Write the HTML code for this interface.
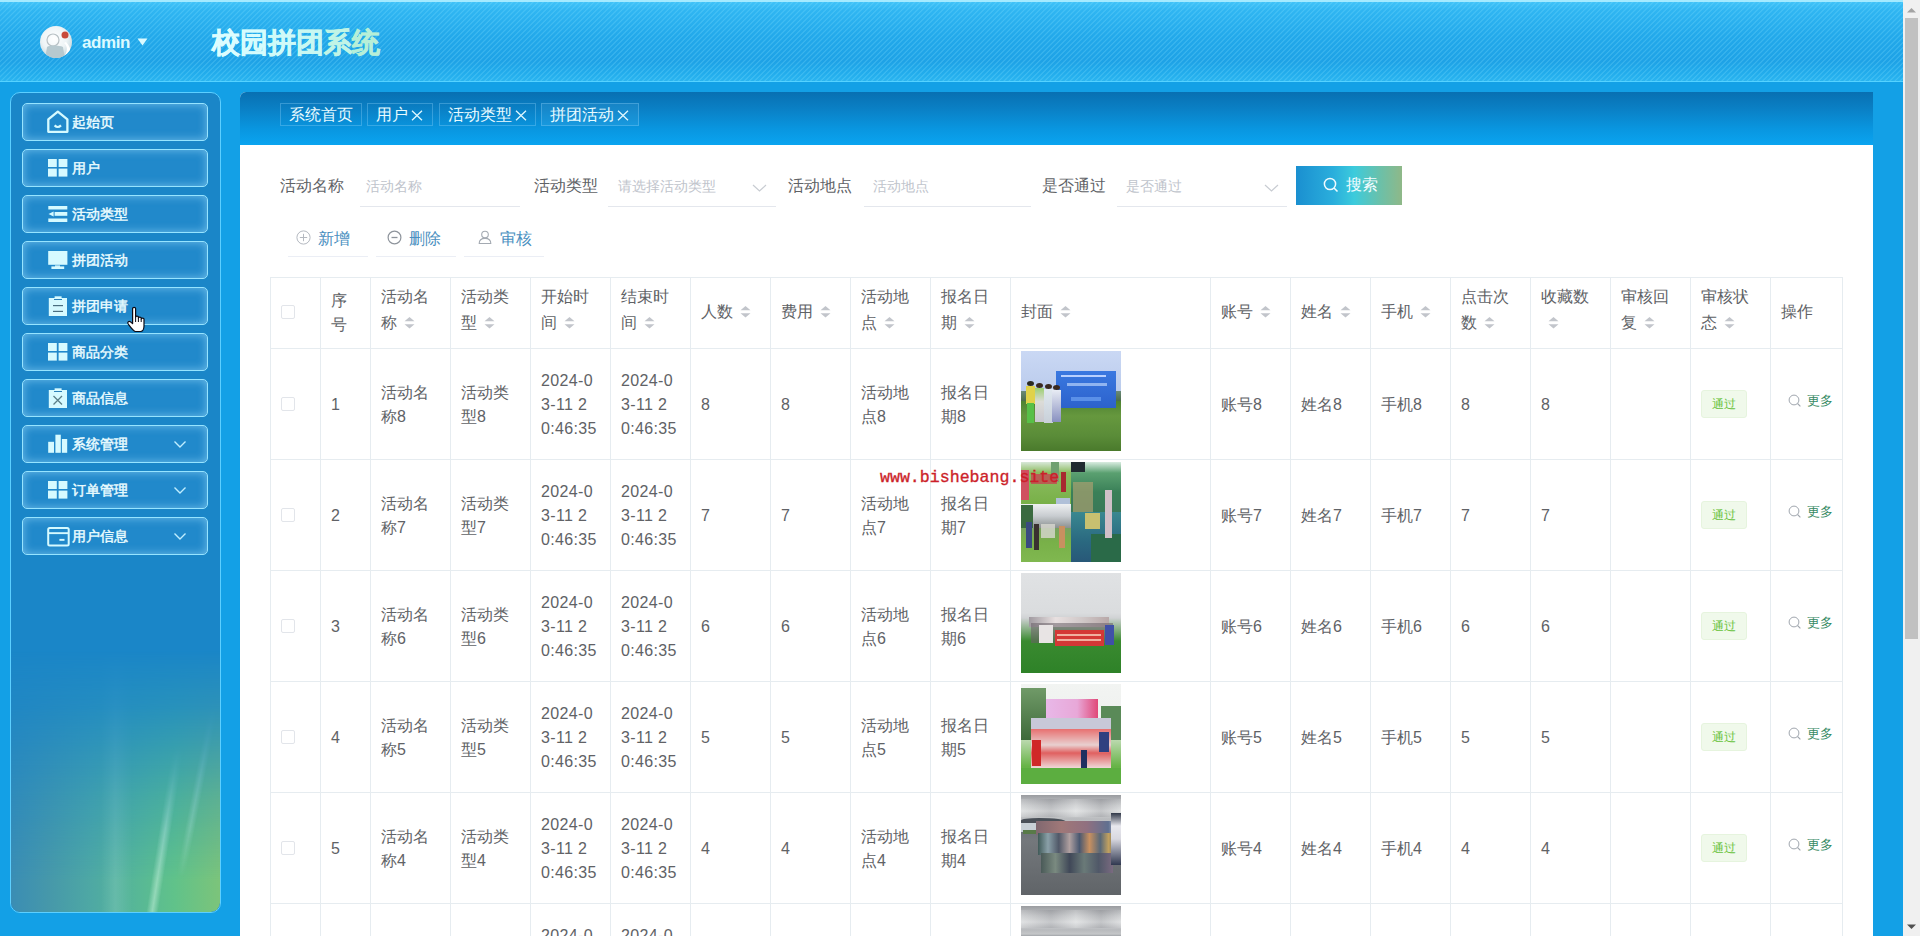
<!DOCTYPE html>
<html><head><meta charset="utf-8">
<style>
*{box-sizing:border-box;margin:0;padding:0}
html,body{width:1920px;height:936px;overflow:hidden}
body{position:relative;background:#13a0e6;font-family:"Liberation Sans",sans-serif;color:#606266}
#L{position:absolute;left:0;top:0;width:1920px;height:936px;overflow:hidden}
#L>div,#L>svg{position:absolute}
#hdr{left:0;top:0;width:1903px;height:82px;
 background:
  repeating-linear-gradient(135deg, rgba(255,255,255,0) 0px, rgba(255,255,255,0) 1.6px, rgba(130,225,255,0.26) 2.4px, rgba(130,225,255,0.26) 2.8px, rgba(255,255,255,0) 3.6px),
  linear-gradient(180deg,#40c2f8 0%,#30b6f2 10%,#22a8ea 45%,#1ea2e6 75%,#22acec 90%,#2ab4f0 100%);
 border-top:2px solid #a4eaff;border-bottom:1px solid #55d2ff}
#uname{left:82px;top:33px;font-size:17px;font-weight:bold;letter-spacing:-0.4px;color:#dcfaff;line-height:20px;white-space:nowrap}
#title{left:212px;top:25px;font-size:28px;font-weight:bold;line-height:36px;white-space:nowrap;-webkit-text-stroke:0.55px currentColor}
#side{left:10px;top:92px;width:211px;height:821px;border:1px solid #5ccfff;border-radius:10px;overflow:hidden;
 background:#1a86c8}
#aur{left:11px;top:650px;width:209px;height:262px;border-radius:0 0 9px 9px;overflow:hidden;
 background:
  linear-gradient(90deg, transparent 0 43%, rgba(230,255,255,.13) 50%, transparent 58%),
  linear-gradient(90deg,#3a8db4 0%,#4698aa 18%,#4ea8a4 38%,#56b698 58%,#60c28a 78%,#7cc47a 100%);
 -webkit-mask-image:linear-gradient(180deg,transparent 0%,rgba(0,0,0,.2) 22%,rgba(0,0,0,.7) 58%,#000 88%);
 mask-image:linear-gradient(180deg,transparent 0%,rgba(0,0,0,.2) 22%,rgba(0,0,0,.7) 58%,#000 88%)}
#aur div{position:absolute}
.mi{left:22px;width:186px;height:38px;border:1px solid #96e4ff;border-radius:5px;
 background:#2189cb;box-shadow:inset 0 0 10px rgba(165,225,255,0.6)}
.mt{left:72px;color:#eafcff;font-size:14px;font-weight:normal;-webkit-text-stroke:0.45px #eafcff;line-height:18px;white-space:nowrap}
#main{left:240px;top:92px;width:1633px;height:844px;background:#fff;border-top-left-radius:6px}
#tabbar{left:240px;top:92px;width:1633px;height:53px;border-top-left-radius:6px;background:linear-gradient(180deg,#0870b2 0%,#0a7fc4 30%,#0996e0 70%,#0aa4f0 100%)}
.tab{top:103px;height:23px;border:1px solid rgba(140,210,250,0.35)}
.tabt{top:104px;color:#e8fbff;font-size:16px;line-height:21px;white-space:nowrap}
#scroll{left:1903px;top:0;width:17px;height:936px;background:#f0f0f0}
#thumb{left:1905px;top:18px;width:13px;height:621px;background:#c1c1c1}
.lbl{font-size:16px;line-height:22px;color:#606266;white-space:nowrap}
.ph{font-size:14px;line-height:18px;color:#c0c4cc;white-space:nowrap}
.ul{top:206px;height:1px;background:#e4e7ed}
#sbtn{left:1296px;top:166px;width:106px;height:39px;background:linear-gradient(90deg,#1a8fd0 0%,#2aaedc 35%,#3ccbdc 55%,#6cc0a8 80%,#8fb888 100%)}
.sbt{left:1346px;top:175px;font-size:16px;line-height:20px;color:#f2fcff;white-space:nowrap}
.ab{top:256px;width:80px;height:1px;background:#ebeef5}
.abt{top:229px;font-size:16px;line-height:20px;color:#4a8fc0;white-space:nowrap}
.hl{height:1px;background:#e6ecf0}
.vl{width:1px;height:700px;background:#e6ecf0}
.ct{font-size:16px;line-height:24px;color:#606266;white-space:nowrap}
.num{letter-spacing:0.35px}
.cb{width:14px;height:14px;border:1px solid #e2e5ea;border-radius:2px}
.img{left:1021px;width:100px;height:100px;background:#6a9a40;overflow:hidden}
.img div{position:absolute}
.tag{width:46px;height:28px;border:1px solid #e6f4de;background:#f0f9eb;color:#67c23a;font-size:12px;line-height:26px;text-align:center;border-radius:3px}
.more{font-size:13px;line-height:16px;color:#368a64;white-space:nowrap}
#wm{left:880px;top:468px;font-family:"Liberation Mono",monospace;font-size:16.6px;line-height:20px;color:#cc1f2a;white-space:nowrap;-webkit-text-stroke:0.35px #cc1f2a}

</style></head>
<body>
<div id="L">
<div id="hdr"></div>
<svg style="left:39px;top:25px" width="34" height="34" viewBox="0 0 34 34"><defs><clipPath id="avc"><circle cx="17" cy="17" r="16"/></clipPath>
<radialGradient id="avg" cx="45%" cy="40%" r="60%"><stop offset="0" stop-color="#ffffff"/><stop offset="0.6" stop-color="#eef4f6"/><stop offset="1" stop-color="#c4d6dc"/></radialGradient></defs>
<g clip-path="url(#avc)"><rect width="34" height="34" fill="url(#avg)"/>
<circle cx="14" cy="15" r="6" fill="none" stroke="#b8c0c4" stroke-width="1.2"/>
<path d="M6 34 L8 22 C10 20 20 20 24 22 L26 34 Z" fill="#b7c9cf"/>
<circle cx="26" cy="10" r="3.5" fill="#c84a3a"/>
<path d="M25 18 C30 22 28 30 22 34 L30 34 C33 28 32 22 27 17 Z" fill="#ffffff"/></g></svg>
<div id="uname">admin</div>
<svg style="left:137px;top:38px" width="11" height="8" viewBox="0 0 11 8"><path d="M0.5 0.5 L10.5 0.5 L5.5 7.5 Z" fill="#dcfaff"/></svg>
<div id="title"><span style="color:#dcfdff">校</span><span style="color:#d6fcfd">园</span><span style="color:#cffaf8">拼</span><span style="color:#c8f8f2">团</span><span style="color:#c0f4e6">系</span><span style="color:#b6efd8">统</span></div>
<div id="side"></div><div id="aur"><div style="left:147px;top:95px;width:12px;height:185px;transform:rotate(9deg);background:linear-gradient(90deg,transparent,rgba(225,255,240,.42) 50%,transparent);-webkit-mask-image:linear-gradient(180deg,transparent,#000 45%,#000)"></div><div style="left:181px;top:55px;width:10px;height:175px;transform:rotate(11deg);background:linear-gradient(90deg,transparent,rgba(225,255,240,.28) 50%,transparent);-webkit-mask-image:linear-gradient(180deg,transparent,#000 40%,#000 70%,transparent)"></div></div>
<div class="mi" style="top:103px"></div>
<div class="mt" style="top:113px">起始页</div>
<div class="mi" style="top:149px"></div>
<div class="mt" style="top:159px">用户</div>
<div class="mi" style="top:195px"></div>
<div class="mt" style="top:205px">活动类型</div>
<div class="mi" style="top:241px"></div>
<div class="mt" style="top:251px">拼团活动</div>
<div class="mi" style="top:287px"></div>
<div class="mt" style="top:297px">拼团申请</div>
<div class="mi" style="top:333px"></div>
<div class="mt" style="top:343px">商品分类</div>
<div class="mi" style="top:379px"></div>
<div class="mt" style="top:389px">商品信息</div>
<div class="mi" style="top:425px"></div>
<div class="mt" style="top:435px">系统管理</div>
<svg style="left:173px;top:440px" width="14" height="9" viewBox="0 0 14 9"><path d="M1.5 1.5 L7 7 L12.5 1.5" fill="none" stroke="#bfeeff" stroke-width="1.4"/></svg>
<div class="mi" style="top:471px"></div>
<div class="mt" style="top:481px">订单管理</div>
<svg style="left:173px;top:486px" width="14" height="9" viewBox="0 0 14 9"><path d="M1.5 1.5 L7 7 L12.5 1.5" fill="none" stroke="#bfeeff" stroke-width="1.4"/></svg>
<div class="mi" style="top:517px"></div>
<div class="mt" style="top:527px">用户信息</div>
<svg style="left:173px;top:532px" width="14" height="9" viewBox="0 0 14 9"><path d="M1.5 1.5 L7 7 L12.5 1.5" fill="none" stroke="#bfeeff" stroke-width="1.4"/></svg>
<svg style="left:46px;top:110px" width="24" height="24" viewBox="0 0 24 24"><path d="M2.3 9.4 L11.8 1.6 L21.4 9.4 L21.4 21.8 L2.3 21.8 Z" fill="none" stroke="#d6faff" stroke-width="2.3" stroke-linejoin="round"/><path d="M8.6 15.4 Q11.8 18.6 15 15.4" fill="none" stroke="#d6faff" stroke-width="2.2"/></svg>
<svg style="left:48px;top:159px" width="20" height="18" viewBox="0 0 20 18"><rect x="0" y="0" width="8.8" height="8" fill="#d6faff"/><rect x="0" y="9.6" width="8.8" height="8" fill="#d6faff"/><rect x="10.6" y="0" width="8.8" height="8" fill="#d6faff"/><rect x="10.6" y="9.6" width="8.8" height="8" fill="#d6faff"/></svg>
<svg style="left:48px;top:205px" width="20" height="18" viewBox="0 0 20 18"><rect x="0.3" y="1" width="19" height="3.5" fill="#d6faff"/><rect x="6.6" y="7" width="12.7" height="3.8" fill="#d6faff"/><path d="M0.5 9 L5.6 6.4 L5.6 11.6 Z" fill="#d6faff"/><rect x="0.3" y="13.5" width="19" height="3.5" fill="#d6faff"/></svg>
<svg style="left:48px;top:250px" width="20" height="20" viewBox="0 0 20 20"><rect x="0.2" y="1" width="19.2" height="13.8" fill="#d6faff"/><rect x="3.4" y="16.4" width="12.8" height="2.6" fill="#d6faff"/><rect x="7" y="15.4" width="5" height="1.5" fill="#d6faff"/></svg>
<svg style="left:48px;top:295px" width="20" height="22" viewBox="0 0 20 22"><rect x="0.8" y="3" width="18.2" height="18" fill="#d6faff"/><rect x="6.6" y="1.3" width="7" height="2.7" fill="#d6faff"/><rect x="6" y="4" width="8" height="1" fill="#2a7fb8"/><rect x="5" y="10" width="10" height="1.2" fill="#4a6f80"/><rect x="5" y="15.8" width="10" height="1.2" fill="#4a6f80"/></svg>
<svg style="left:48px;top:343px" width="20" height="18" viewBox="0 0 20 18"><rect x="0" y="0" width="8.8" height="8" fill="#d6faff"/><rect x="0" y="9.6" width="8.8" height="8" fill="#d6faff"/><rect x="10.6" y="0" width="8.8" height="8" fill="#d6faff"/><rect x="10.6" y="9.6" width="8.8" height="8" fill="#d6faff"/></svg>
<svg style="left:48px;top:387px" width="20" height="22" viewBox="0 0 20 22"><rect x="0.8" y="3" width="18.2" height="18" fill="#d6faff"/><rect x="6.6" y="1.3" width="7" height="2.7" fill="#d6faff"/><rect x="6" y="4" width="8" height="1" fill="#2a7fb8"/><path d="M5.5 9 L14 17.5 M14 9 L5.5 17.5" stroke="#5a7f88" stroke-width="1.3"/></svg>
<svg style="left:48px;top:434px" width="20" height="20" viewBox="0 0 20 20"><rect x="0.2" y="7.8" width="5.8" height="11" fill="#d6faff"/><rect x="7.4" y="0.7" width="5.4" height="18.1" fill="#d6faff"/><rect x="13.9" y="5" width="5.3" height="13.8" fill="#d6faff"/></svg>
<svg style="left:48px;top:481px" width="20" height="18" viewBox="0 0 20 18"><rect x="0" y="0" width="8.8" height="8" fill="#d6faff"/><rect x="0" y="9.6" width="8.8" height="8" fill="#d6faff"/><rect x="10.6" y="0" width="8.8" height="8" fill="#d6faff"/><rect x="10.6" y="9.6" width="8.8" height="8" fill="#d6faff"/></svg>
<svg style="left:46px;top:526px" width="24" height="21" viewBox="0 0 24 21"><rect x="2.2" y="1.9" width="20.5" height="17.7" rx="1.5" fill="none" stroke="#d6faff" stroke-width="2"/><rect x="2.5" y="6.2" width="20" height="1.9" fill="#d6faff"/><rect x="13.4" y="12.9" width="5.1" height="1.9" fill="#d6faff"/></svg>
<svg style="left:126px;top:306px" width="22" height="27" viewBox="0 0 22 27"><path d="M6.6 2.6 C6.6 1 9.6 1 9.6 2.6 L9.6 11 C9.6 9.7 12.4 9.7 12.4 11 L12.4 12 C12.4 10.8 15.2 10.8 15.2 12 L15.2 13 C15.2 11.8 18 11.8 18 13 L18 20 C18 23 16.5 25.5 14.5 25.5 L9.5 25.5 C7.5 25.5 5.5 22.5 2.2 18 C1 16.3 2.6 14.6 4.4 15.8 L6.6 17.6 Z" fill="#ffffff" stroke="#0a0a14" stroke-width="1.2" stroke-linejoin="round"/><path d="M9.6 11 L9.6 16 M12.4 12 L12.4 16 M15.2 13 L15.2 16" stroke="#0a0a14" stroke-width="1"/></svg>
<div id="main"></div><div id="tabbar"></div>
<div class="tab" style="left:280px;width:82px"></div>
<div class="tabt" style="left:289px">系统首页</div>
<div class="tab" style="left:367px;width:66px"></div>
<div class="tabt" style="left:376px">用户</div>
<svg style="left:411px;top:110px" width="12" height="11" viewBox="0 0 12 11"><path d="M1 0.8 L11 10.2 M11 0.8 L1 10.2" stroke="#dff8ff" stroke-width="1.3"/></svg>
<div class="tab" style="left:439px;width:97px"></div>
<div class="tabt" style="left:448px">活动类型</div>
<svg style="left:515px;top:110px" width="12" height="11" viewBox="0 0 12 11"><path d="M1 0.8 L11 10.2 M11 0.8 L1 10.2" stroke="#dff8ff" stroke-width="1.3"/></svg>
<div class="tab" style="left:541px;width:98px;background:rgba(150,220,255,0.10)"></div>
<div class="tabt" style="left:550px">拼团活动</div>
<svg style="left:617px;top:110px" width="12" height="11" viewBox="0 0 12 11"><path d="M1 0.8 L11 10.2 M11 0.8 L1 10.2" stroke="#dff8ff" stroke-width="1.3"/></svg>
<div class="lbl" style="left:280px;top:175px">活动名称</div>
<div class="ph" style="left:366px;top:177px">活动名称</div>
<div class="ul" style="left:360px;width:160px"></div>
<div class="lbl" style="left:534px;top:175px">活动类型</div>
<div class="ph" style="left:618px;top:177px">请选择活动类型</div>
<div class="ul" style="left:608px;width:168px"></div>
<svg style="left:752px;top:184px" width="15" height="8" viewBox="0 0 15 8"><path d="M1 1 L7.5 7 L14 1" fill="none" stroke="#c8ccd2" stroke-width="1.2"/></svg>
<div class="lbl" style="left:788px;top:175px">活动地点</div>
<div class="ph" style="left:873px;top:177px">活动地点</div>
<div class="ul" style="left:864px;width:167px"></div>
<div class="lbl" style="left:1042px;top:175px">是否通过</div>
<div class="ph" style="left:1126px;top:177px">是否通过</div>
<div class="ul" style="left:1117px;width:170px"></div>
<svg style="left:1264px;top:184px" width="15" height="8" viewBox="0 0 15 8"><path d="M1 1 L7.5 7 L14 1" fill="none" stroke="#c8ccd2" stroke-width="1.2"/></svg>
<div id="sbtn"></div>
<svg style="left:1323px;top:177px" width="16" height="16" viewBox="0 0 16 16"><circle cx="7" cy="7" r="5.6" fill="none" stroke="#f0fbff" stroke-width="1.5"/><path d="M11 11 L14.5 14.5" stroke="#f0fbff" stroke-width="1.6"/></svg>
<div class="sbt">搜索</div>
<div class="ab" style="left:288px"></div>
<svg style="left:296px;top:230px" width="15" height="15" viewBox="0 0 15 15"><circle cx="7.5" cy="7.5" r="6.6" fill="none" stroke="#b4b9c0" stroke-width="1"/><path d="M7.5 3.8V11.2M3.8 7.5H11.2" stroke="#b4b9c0" stroke-width="1"/></svg>
<div class="abt" style="left:318px">新增</div>
<div class="ab" style="left:376px"></div>
<svg style="left:387px;top:230px" width="15" height="15" viewBox="0 0 15 15"><circle cx="7.5" cy="7.5" r="6.4" fill="none" stroke="#8e949c" stroke-width="1.2"/><path d="M4.5 7.5H10.5" stroke="#8e949c" stroke-width="1.3"/></svg>
<div class="abt" style="left:409px">删除</div>
<div class="ab" style="left:464px"></div>
<svg style="left:478px;top:230px" width="15" height="15" viewBox="0 0 15 15"><circle cx="7" cy="4.6" r="3.3" fill="none" stroke="#a4aab2" stroke-width="1.1"/><path d="M1.2 13.5 C1.2 9.8 3.6 8.4 7 8.4 C10.4 8.4 12.8 9.8 12.8 13.5 Z" fill="none" stroke="#a4aab2" stroke-width="1.1"/></svg>
<div class="abt" style="left:500px">审核</div>
<div class="hl" style="left:270px;top:277px;width:1573px"></div>
<div class="hl" style="left:270px;top:348px;width:1573px"></div>
<div class="hl" style="left:270px;top:459px;width:1573px"></div>
<div class="hl" style="left:270px;top:570px;width:1573px"></div>
<div class="hl" style="left:270px;top:681px;width:1573px"></div>
<div class="hl" style="left:270px;top:792px;width:1573px"></div>
<div class="hl" style="left:270px;top:903px;width:1573px"></div>
<div class="vl" style="left:270px;top:277px"></div>
<div class="vl" style="left:320px;top:277px"></div>
<div class="vl" style="left:370px;top:277px"></div>
<div class="vl" style="left:450px;top:277px"></div>
<div class="vl" style="left:530px;top:277px"></div>
<div class="vl" style="left:610px;top:277px"></div>
<div class="vl" style="left:690px;top:277px"></div>
<div class="vl" style="left:770px;top:277px"></div>
<div class="vl" style="left:850px;top:277px"></div>
<div class="vl" style="left:930px;top:277px"></div>
<div class="vl" style="left:1010px;top:277px"></div>
<div class="vl" style="left:1210px;top:277px"></div>
<div class="vl" style="left:1290px;top:277px"></div>
<div class="vl" style="left:1370px;top:277px"></div>
<div class="vl" style="left:1450px;top:277px"></div>
<div class="vl" style="left:1530px;top:277px"></div>
<div class="vl" style="left:1610px;top:277px"></div>
<div class="vl" style="left:1690px;top:277px"></div>
<div class="vl" style="left:1770px;top:277px"></div>
<div class="vl" style="left:1842px;top:277px"></div>
<div class="cb" style="left:281px;top:305px"></div>
<div class="ct" style="left:331px;top:289.3px">序</div>
<div class="ct" style="left:331px;top:313.3px">号</div>
<div class="ct" style="left:381px;top:284.5px">活动名</div>
<div class="ct" style="left:381px;top:311px">称</div>
<svg style="left:404px;top:317.3px" width="11" height="12" viewBox="0 0 11 12"><path d="M0.5 4.3 L5.5 0 L10.5 4.3 Z M0.5 7.2 L10.5 7.2 L5.5 11.5 Z" fill="#c2c5cb"/></svg>
<div class="ct" style="left:461px;top:284.5px">活动类</div>
<div class="ct" style="left:461px;top:311px">型</div>
<svg style="left:484px;top:317.3px" width="11" height="12" viewBox="0 0 11 12"><path d="M0.5 4.3 L5.5 0 L10.5 4.3 Z M0.5 7.2 L10.5 7.2 L5.5 11.5 Z" fill="#c2c5cb"/></svg>
<div class="ct" style="left:541px;top:284.5px">开始时</div>
<div class="ct" style="left:541px;top:311px">间</div>
<svg style="left:564px;top:317.3px" width="11" height="12" viewBox="0 0 11 12"><path d="M0.5 4.3 L5.5 0 L10.5 4.3 Z M0.5 7.2 L10.5 7.2 L5.5 11.5 Z" fill="#c2c5cb"/></svg>
<div class="ct" style="left:621px;top:284.5px">结束时</div>
<div class="ct" style="left:621px;top:311px">间</div>
<svg style="left:644px;top:317.3px" width="11" height="12" viewBox="0 0 11 12"><path d="M0.5 4.3 L5.5 0 L10.5 4.3 Z M0.5 7.2 L10.5 7.2 L5.5 11.5 Z" fill="#c2c5cb"/></svg>
<div class="ct" style="left:701px;top:299.5px">人数</div>
<svg style="left:740px;top:305.8px" width="11" height="12" viewBox="0 0 11 12"><path d="M0.5 4.3 L5.5 0 L10.5 4.3 Z M0.5 7.2 L10.5 7.2 L5.5 11.5 Z" fill="#c2c5cb"/></svg>
<div class="ct" style="left:781px;top:299.5px">费用</div>
<svg style="left:820px;top:305.8px" width="11" height="12" viewBox="0 0 11 12"><path d="M0.5 4.3 L5.5 0 L10.5 4.3 Z M0.5 7.2 L10.5 7.2 L5.5 11.5 Z" fill="#c2c5cb"/></svg>
<div class="ct" style="left:861px;top:284.5px">活动地</div>
<div class="ct" style="left:861px;top:311px">点</div>
<svg style="left:884px;top:317.3px" width="11" height="12" viewBox="0 0 11 12"><path d="M0.5 4.3 L5.5 0 L10.5 4.3 Z M0.5 7.2 L10.5 7.2 L5.5 11.5 Z" fill="#c2c5cb"/></svg>
<div class="ct" style="left:941px;top:284.5px">报名日</div>
<div class="ct" style="left:941px;top:311px">期</div>
<svg style="left:964px;top:317.3px" width="11" height="12" viewBox="0 0 11 12"><path d="M0.5 4.3 L5.5 0 L10.5 4.3 Z M0.5 7.2 L10.5 7.2 L5.5 11.5 Z" fill="#c2c5cb"/></svg>
<div class="ct" style="left:1021px;top:299.5px">封面</div>
<svg style="left:1060px;top:305.8px" width="11" height="12" viewBox="0 0 11 12"><path d="M0.5 4.3 L5.5 0 L10.5 4.3 Z M0.5 7.2 L10.5 7.2 L5.5 11.5 Z" fill="#c2c5cb"/></svg>
<div class="ct" style="left:1221px;top:299.5px">账号</div>
<svg style="left:1260px;top:305.8px" width="11" height="12" viewBox="0 0 11 12"><path d="M0.5 4.3 L5.5 0 L10.5 4.3 Z M0.5 7.2 L10.5 7.2 L5.5 11.5 Z" fill="#c2c5cb"/></svg>
<div class="ct" style="left:1301px;top:299.5px">姓名</div>
<svg style="left:1340px;top:305.8px" width="11" height="12" viewBox="0 0 11 12"><path d="M0.5 4.3 L5.5 0 L10.5 4.3 Z M0.5 7.2 L10.5 7.2 L5.5 11.5 Z" fill="#c2c5cb"/></svg>
<div class="ct" style="left:1381px;top:299.5px">手机</div>
<svg style="left:1420px;top:305.8px" width="11" height="12" viewBox="0 0 11 12"><path d="M0.5 4.3 L5.5 0 L10.5 4.3 Z M0.5 7.2 L10.5 7.2 L5.5 11.5 Z" fill="#c2c5cb"/></svg>
<div class="ct" style="left:1461px;top:284.5px">点击次</div>
<div class="ct" style="left:1461px;top:311px">数</div>
<svg style="left:1484px;top:317.3px" width="11" height="12" viewBox="0 0 11 12"><path d="M0.5 4.3 L5.5 0 L10.5 4.3 Z M0.5 7.2 L10.5 7.2 L5.5 11.5 Z" fill="#c2c5cb"/></svg>
<div class="ct" style="left:1541px;top:284.5px">收藏数</div>
<svg style="left:1548px;top:317.3px" width="11" height="12" viewBox="0 0 11 12"><path d="M0.5 4.3 L5.5 0 L10.5 4.3 Z M0.5 7.2 L10.5 7.2 L5.5 11.5 Z" fill="#c2c5cb"/></svg>
<div class="ct" style="left:1621px;top:284.5px">审核回</div>
<div class="ct" style="left:1621px;top:311px">复</div>
<svg style="left:1644px;top:317.3px" width="11" height="12" viewBox="0 0 11 12"><path d="M0.5 4.3 L5.5 0 L10.5 4.3 Z M0.5 7.2 L10.5 7.2 L5.5 11.5 Z" fill="#c2c5cb"/></svg>
<div class="ct" style="left:1701px;top:284.5px">审核状</div>
<div class="ct" style="left:1701px;top:311px">态</div>
<svg style="left:1724px;top:317.3px" width="11" height="12" viewBox="0 0 11 12"><path d="M0.5 4.3 L5.5 0 L10.5 4.3 Z M0.5 7.2 L10.5 7.2 L5.5 11.5 Z" fill="#c2c5cb"/></svg>
<div class="ct" style="left:1781px;top:299.5px">操作</div>
<div class="cb" style="left:281px;top:397px"></div>
<div class="ct" style="left:331px;top:392.5px">1</div>
<div class="ct" style="left:381px;top:380.5px">活动名<br>称8</div>
<div class="ct" style="left:461px;top:380.5px">活动类<br>型8</div>
<div class="ct num" style="left:541px;top:368.5px">2024-0<br>3-11 2<br>0:46:35</div>
<div class="ct num" style="left:621px;top:368.5px">2024-0<br>3-11 2<br>0:46:35</div>
<div class="ct" style="left:701px;top:392.5px">8</div>
<div class="ct" style="left:781px;top:392.5px">8</div>
<div class="ct" style="left:861px;top:380.5px">活动地<br>点8</div>
<div class="ct" style="left:941px;top:380.5px">报名日<br>期8</div>
<div class="img im1" style="top:351px"><div style="left:0;top:0;width:100px;height:52px;background:linear-gradient(180deg,#cad8f4,#b6c8ea)"></div>
<div style="left:0;top:40px;width:100px;height:14px;background:linear-gradient(180deg,#6a8a78,#40603a)"></div>
<div style="left:0;top:50px;width:100px;height:50px;background:linear-gradient(180deg,#4e8232 0,#66983e 30%,#5a8c38 70%,#4a7a2c 100%)"></div>
<div style="left:35px;top:20px;width:60px;height:37px;background:linear-gradient(180deg,#3a78e0,#2c62cc)"></div>
<div style="left:40px;top:24px;width:45px;height:2px;background:#b8d0ff"></div>
<div style="left:46px;top:32px;width:40px;height:3px;background:#90b4f0"></div>
<div style="left:50px;top:46px;width:30px;height:4px;background:#5a90e8"></div>
<div style="left:6px;top:30px;width:7px;height:5px;border-radius:50%;background:#2a2a20"></div>
<div style="left:5px;top:35px;width:9px;height:18px;background:#e0d24a"></div>
<div style="left:6px;top:52px;width:7px;height:20px;background:#58c048"></div>
<div style="left:15px;top:32px;width:7px;height:5px;border-radius:50%;background:#3a2a20"></div>
<div style="left:14px;top:37px;width:9px;height:34px;background:linear-gradient(180deg,#9ccf70,#dcdcd8 40%,#c8c8d0)"></div>
<div style="left:24px;top:33px;width:7px;height:5px;border-radius:50%;background:#3a2a20"></div>
<div style="left:23px;top:38px;width:9px;height:34px;background:linear-gradient(180deg,#e0e8f0,#c8d0d8)"></div>
<div style="left:32px;top:34px;width:7px;height:5px;border-radius:50%;background:#3a2a20"></div>
<div style="left:31px;top:39px;width:9px;height:32px;background:linear-gradient(180deg,#e8ecf4,#8890c0)"></div></div>
<div class="ct" style="left:1221px;top:392.5px">账号8</div>
<div class="ct" style="left:1301px;top:392.5px">姓名8</div>
<div class="ct" style="left:1381px;top:392.5px">手机8</div>
<div class="ct" style="left:1461px;top:392.5px">8</div>
<div class="ct" style="left:1541px;top:392.5px">8</div>
<div class="tag" style="left:1701px;top:390px">通过</div>
<svg style="left:1788px;top:394px" width="14" height="14" viewBox="0 0 14 14"><circle cx="6" cy="6" r="4.9" fill="none" stroke="#a0a6ae" stroke-width="1"/><path d="M9.5 9.5 L12.4 12.4" stroke="#a0a6ae" stroke-width="1.1"/></svg>
<div class="more" style="left:1807px;top:393px">更多</div>
<div class="cb" style="left:281px;top:508px"></div>
<div class="ct" style="left:331px;top:503.5px">2</div>
<div class="ct" style="left:381px;top:491.5px">活动名<br>称7</div>
<div class="ct" style="left:461px;top:491.5px">活动类<br>型7</div>
<div class="ct num" style="left:541px;top:479.5px">2024-0<br>3-11 2<br>0:46:35</div>
<div class="ct num" style="left:621px;top:479.5px">2024-0<br>3-11 2<br>0:46:35</div>
<div class="ct" style="left:701px;top:503.5px">7</div>
<div class="ct" style="left:781px;top:503.5px">7</div>
<div class="ct" style="left:861px;top:491.5px">活动地<br>点7</div>
<div class="ct" style="left:941px;top:491.5px">报名日<br>期7</div>
<div class="img im2" style="top:462px"><div style="left:0;top:0;width:50px;height:42px;background:linear-gradient(180deg,#d8e8d8 0,#8cbc60 25%,#78b048 100%)"></div>
<div style="left:30px;top:0;width:8px;height:20px;background:#70a070"></div>
<div style="left:0;top:8px;width:8px;height:30px;background:#d05060"></div>
<div style="left:10px;top:12px;width:26px;height:10px;background:#c84050;opacity:.75"></div>
<div style="left:40px;top:10px;width:5px;height:20px;background:#a82830"></div>
<div style="left:35px;top:36px;width:14px;height:6px;background:#b0c0d8"></div>
<div style="left:0;top:42px;width:50px;height:24px;background:linear-gradient(180deg,#eef0f2,#c8ccd0 50%,#8a9090)"></div>
<div style="left:0;top:43px;width:12px;height:24px;background:#3a6a40"></div>
<div style="left:0;top:66px;width:50px;height:34px;background:linear-gradient(180deg,#78a060,#78b048 40%,#80b850)"></div>
<div style="left:5px;top:60px;width:6px;height:26px;background:#3a4a80"></div>
<div style="left:13px;top:62px;width:5px;height:26px;background:#3a3030"></div>
<div style="left:20px;top:62px;width:14px;height:14px;background:#d8d8d0;opacity:.8"></div>
<div style="left:38px;top:64px;width:6px;height:22px;background:#c89060"></div>
<div style="left:50px;top:0;width:50px;height:50px;background:linear-gradient(180deg,#d8ece0 0,#5aa070 22%,#3a8058 60%,#3a7858 100%)"></div>
<div style="left:50px;top:0;width:14px;height:10px;background:#202a30"></div>
<div style="left:52px;top:20px;width:20px;height:30px;background:#a8a070;opacity:.7"></div>
<div style="left:50px;top:50px;width:50px;height:50px;background:linear-gradient(180deg,#3a8890,#2a6880 60%,#285878)"></div>
<div style="left:64px;top:51px;width:15px;height:16px;background:#c8c070"></div>
<div style="left:70px;top:72px;width:30px;height:28px;background:#2a6a48"></div>
<div style="left:84px;top:28px;width:7px;height:48px;background:#d0c0c8"></div></div>
<div class="ct" style="left:1221px;top:503.5px">账号7</div>
<div class="ct" style="left:1301px;top:503.5px">姓名7</div>
<div class="ct" style="left:1381px;top:503.5px">手机7</div>
<div class="ct" style="left:1461px;top:503.5px">7</div>
<div class="ct" style="left:1541px;top:503.5px">7</div>
<div class="tag" style="left:1701px;top:501px">通过</div>
<svg style="left:1788px;top:505px" width="14" height="14" viewBox="0 0 14 14"><circle cx="6" cy="6" r="4.9" fill="none" stroke="#a0a6ae" stroke-width="1"/><path d="M9.5 9.5 L12.4 12.4" stroke="#a0a6ae" stroke-width="1.1"/></svg>
<div class="more" style="left:1807px;top:504px">更多</div>
<div class="cb" style="left:281px;top:619px"></div>
<div class="ct" style="left:331px;top:614.5px">3</div>
<div class="ct" style="left:381px;top:602.5px">活动名<br>称6</div>
<div class="ct" style="left:461px;top:602.5px">活动类<br>型6</div>
<div class="ct num" style="left:541px;top:590.5px">2024-0<br>3-11 2<br>0:46:35</div>
<div class="ct num" style="left:621px;top:590.5px">2024-0<br>3-11 2<br>0:46:35</div>
<div class="ct" style="left:701px;top:614.5px">6</div>
<div class="ct" style="left:781px;top:614.5px">6</div>
<div class="ct" style="left:861px;top:602.5px">活动地<br>点6</div>
<div class="ct" style="left:941px;top:602.5px">报名日<br>期6</div>
<div class="img im3" style="top:573px"><div style="left:0;top:0;width:100px;height:100px;background:linear-gradient(180deg,#e0e2e4 0,#dadcde 40%,#d0d2d4 45%,#3a8a30 68%,#2e8228 100%)"></div>
<div style="left:8px;top:44px;width:80px;height:10px;background:linear-gradient(90deg,#a09aa0,#e8e0e0,#d0c8c8,#b8a8a8)"></div>
<div style="left:10px;top:50px;width:82px;height:20px;background:#6a6068;opacity:.55"></div>
<div style="left:34px;top:57px;width:49px;height:16px;background:#d43836"></div>
<div style="left:36px;top:61px;width:44px;height:2px;background:#f0b0a0"></div>
<div style="left:36px;top:66px;width:44px;height:2px;background:#f0b0a0"></div>
<div style="left:18px;top:52px;width:14px;height:18px;background:#e8e4e4"></div>
<div style="left:84px;top:52px;width:9px;height:20px;background:#4050a8"></div></div>
<div class="ct" style="left:1221px;top:614.5px">账号6</div>
<div class="ct" style="left:1301px;top:614.5px">姓名6</div>
<div class="ct" style="left:1381px;top:614.5px">手机6</div>
<div class="ct" style="left:1461px;top:614.5px">6</div>
<div class="ct" style="left:1541px;top:614.5px">6</div>
<div class="tag" style="left:1701px;top:612px">通过</div>
<svg style="left:1788px;top:616px" width="14" height="14" viewBox="0 0 14 14"><circle cx="6" cy="6" r="4.9" fill="none" stroke="#a0a6ae" stroke-width="1"/><path d="M9.5 9.5 L12.4 12.4" stroke="#a0a6ae" stroke-width="1.1"/></svg>
<div class="more" style="left:1807px;top:615px">更多</div>
<div class="cb" style="left:281px;top:730px"></div>
<div class="ct" style="left:331px;top:725.5px">4</div>
<div class="ct" style="left:381px;top:713.5px">活动名<br>称5</div>
<div class="ct" style="left:461px;top:713.5px">活动类<br>型5</div>
<div class="ct num" style="left:541px;top:701.5px">2024-0<br>3-11 2<br>0:46:35</div>
<div class="ct num" style="left:621px;top:701.5px">2024-0<br>3-11 2<br>0:46:35</div>
<div class="ct" style="left:701px;top:725.5px">5</div>
<div class="ct" style="left:781px;top:725.5px">5</div>
<div class="ct" style="left:861px;top:713.5px">活动地<br>点5</div>
<div class="ct" style="left:941px;top:713.5px">报名日<br>期5</div>
<div class="img im4" style="top:684px"><div style="left:0;top:0;width:100px;height:100px;background:linear-gradient(180deg,#f2f4f2 0,#eef0ee 40%,#68b448 82%,#5cac40 100%)"></div>
<div style="left:0;top:4px;width:25px;height:52px;background:linear-gradient(180deg,#709a68,#3e6a3a)"></div>
<div style="left:80px;top:22px;width:20px;height:34px;background:#5a8a58"></div>
<div style="left:25px;top:15px;width:52px;height:21px;background:linear-gradient(90deg,#e8b8e8,#e8a8d8 60%,#e04878)"></div>
<div style="left:10px;top:34px;width:80px;height:12px;background:#c8c8d8"></div>
<div style="left:10px;top:45px;width:80px;height:40px;background:linear-gradient(180deg,#e87070,#e8d0d0 40%,#e06060 60%,#f0e0e0)"></div>
<div style="left:11px;top:56px;width:9px;height:26px;background:#d02828"></div>
<div style="left:60px;top:66px;width:6px;height:18px;background:#203060"></div>
<div style="left:78px;top:48px;width:10px;height:20px;background:#304080"></div>
<div style="left:0;top:84px;width:100px;height:16px;background:#5cae40"></div></div>
<div class="ct" style="left:1221px;top:725.5px">账号5</div>
<div class="ct" style="left:1301px;top:725.5px">姓名5</div>
<div class="ct" style="left:1381px;top:725.5px">手机5</div>
<div class="ct" style="left:1461px;top:725.5px">5</div>
<div class="ct" style="left:1541px;top:725.5px">5</div>
<div class="tag" style="left:1701px;top:723px">通过</div>
<svg style="left:1788px;top:727px" width="14" height="14" viewBox="0 0 14 14"><circle cx="6" cy="6" r="4.9" fill="none" stroke="#a0a6ae" stroke-width="1"/><path d="M9.5 9.5 L12.4 12.4" stroke="#a0a6ae" stroke-width="1.1"/></svg>
<div class="more" style="left:1807px;top:726px">更多</div>
<div class="cb" style="left:281px;top:841px"></div>
<div class="ct" style="left:331px;top:836.5px">5</div>
<div class="ct" style="left:381px;top:824.5px">活动名<br>称4</div>
<div class="ct" style="left:461px;top:824.5px">活动类<br>型4</div>
<div class="ct num" style="left:541px;top:812.5px">2024-0<br>3-11 2<br>0:46:35</div>
<div class="ct num" style="left:621px;top:812.5px">2024-0<br>3-11 2<br>0:46:35</div>
<div class="ct" style="left:701px;top:836.5px">4</div>
<div class="ct" style="left:781px;top:836.5px">4</div>
<div class="ct" style="left:861px;top:824.5px">活动地<br>点4</div>
<div class="ct" style="left:941px;top:824.5px">报名日<br>期4</div>
<div class="img im5" style="top:795px"><div style="left:0;top:0;width:100px;height:100px;background:linear-gradient(180deg,#9a9ca0 0,#c8cacc 10%,#dcdedf 16%,#b8babd 24%,#c4c6c8 28%,#6a7078 33%,#74787c 45%,#606468 100%)"></div>
<div style="left:0;top:4px;width:100px;height:18px;background:linear-gradient(90deg,rgba(255,255,255,.15),rgba(80,80,90,.15) 30%,rgba(255,255,255,.2) 55%,rgba(70,70,80,.15) 80%,rgba(255,255,255,.1))"></div>
<div style="left:0;top:23px;width:45px;height:6px;background:#4a5058;border-radius:40% 60% 0 0"></div>
<div style="left:0;top:28px;width:18px;height:9px;background:#c8d0d6"></div>
<div style="left:2px;top:35px;width:16px;height:4px;background:#587a48"></div>
<div style="left:15px;top:26px;width:85px;height:14px;background:linear-gradient(90deg,#806870,#a07878 30%,#907080 60%,#607090 85%,#e8e8f0)"></div>
<div style="left:17px;top:38px;width:83px;height:22px;background:linear-gradient(90deg,#405a58,#8aa0a8 12%,#505868 25%,#b0a0a0 38%,#4a5870 50%,#c89060 62%,#586878 75%,#c0a060 85%,#3a4860)"></div>
<div style="left:20px;top:58px;width:72px;height:20px;background:linear-gradient(90deg,#4a5a58,#7a8a80 20%,#404858 40%,#6a7a78 60%,#505868 80%,#7a6a80)"></div>
<div style="left:90px;top:18px;width:10px;height:52px;background:linear-gradient(180deg,#303848,#e8e8ee 25%,#d8d8e0 50%,#303850)"></div></div>
<div class="ct" style="left:1221px;top:836.5px">账号4</div>
<div class="ct" style="left:1301px;top:836.5px">姓名4</div>
<div class="ct" style="left:1381px;top:836.5px">手机4</div>
<div class="ct" style="left:1461px;top:836.5px">4</div>
<div class="ct" style="left:1541px;top:836.5px">4</div>
<div class="tag" style="left:1701px;top:834px">通过</div>
<svg style="left:1788px;top:838px" width="14" height="14" viewBox="0 0 14 14"><circle cx="6" cy="6" r="4.9" fill="none" stroke="#a0a6ae" stroke-width="1"/><path d="M9.5 9.5 L12.4 12.4" stroke="#a0a6ae" stroke-width="1.1"/></svg>
<div class="more" style="left:1807px;top:837px">更多</div>
<div class="cb" style="left:281px;top:952px"></div>
<div class="ct" style="left:331px;top:947.5px">6</div>
<div class="ct" style="left:381px;top:935.5px">活动名<br>称3</div>
<div class="ct" style="left:461px;top:935.5px">活动类<br>型3</div>
<div class="ct num" style="left:541px;top:923.5px">2024-0<br>3-11 2<br>0:46:35</div>
<div class="ct num" style="left:621px;top:923.5px">2024-0<br>3-11 2<br>0:46:35</div>
<div class="ct" style="left:701px;top:947.5px">3</div>
<div class="ct" style="left:781px;top:947.5px">3</div>
<div class="ct" style="left:861px;top:935.5px">活动地<br>点3</div>
<div class="ct" style="left:941px;top:935.5px">报名日<br>期3</div>
<div class="img im6" style="top:906px"><div style="left:0;top:0;width:100px;height:100px;background:linear-gradient(180deg,#9a9ca0 0,#c8cacc 10%,#dcdedf 16%,#b8babd 24%,#c4c6c8 28%,#6a7078 33%,#74787c 45%,#606468 100%)"></div>
<div style="left:0;top:4px;width:100px;height:18px;background:linear-gradient(90deg,rgba(255,255,255,.15),rgba(80,80,90,.15) 30%,rgba(255,255,255,.2) 55%,rgba(70,70,80,.15) 80%,rgba(255,255,255,.1))"></div></div>
<div class="ct" style="left:1221px;top:947.5px">账号3</div>
<div class="ct" style="left:1301px;top:947.5px">姓名3</div>
<div class="ct" style="left:1381px;top:947.5px">手机3</div>
<div class="ct" style="left:1461px;top:947.5px">3</div>
<div class="ct" style="left:1541px;top:947.5px">3</div>
<div class="tag" style="left:1701px;top:945px">通过</div>
<svg style="left:1788px;top:949px" width="14" height="14" viewBox="0 0 14 14"><circle cx="6" cy="6" r="4.9" fill="none" stroke="#a0a6ae" stroke-width="1"/><path d="M9.5 9.5 L12.4 12.4" stroke="#a0a6ae" stroke-width="1.1"/></svg>
<div class="more" style="left:1807px;top:948px">更多</div>
<div id="wm">www.bishebang.site</div>
<div id="scroll"></div><div id="thumb"></div>
<svg style="left:1905px;top:6px" width="13" height="8" viewBox="0 0 13 8"><path d="M2 6.5 L6.5 2 L11 6.5 Z" fill="#a3a3a3"/></svg>
<svg style="left:1905px;top:923px" width="13" height="8" viewBox="0 0 13 8"><path d="M2 1.5 L11 1.5 L6.5 6 Z" fill="#505050"/></svg>
</div>
</body></html>
